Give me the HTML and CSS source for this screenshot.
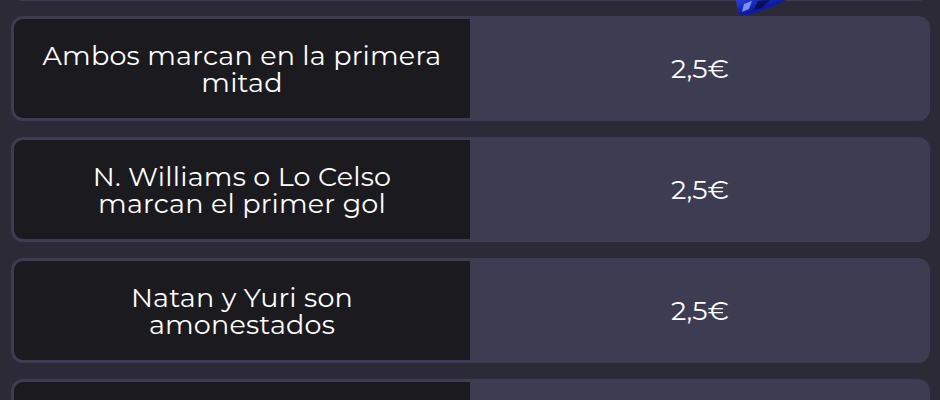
FILE: index.html
```html
<!DOCTYPE html>
<html lang="es">
<head>
<meta charset="utf-8">
<link rel="stylesheet" href="styles.css">
</head>
<body>
<div class="page">
  <div class="list">
    <div class="card card-prev">
      <div class="label"></div>
      <div class="price"></div>
    </div>
    <div class="card">
      <div class="label">Ambos marcan en la primera mitad</div>
      <div class="price">2,5€</div>
    </div>
    <div class="card">
      <div class="label">N. Williams o Lo Celso<br>marcan el primer gol</div>
      <div class="price">2,5€</div>
    </div>
    <div class="card">
      <div class="label">Natan y Yuri son<br>amonestados</div>
      <div class="price">2,5€</div>
    </div>
    <div class="card">
      <div class="label"></div>
      <div class="price"></div>
    </div>
  </div>
  <svg class="deco" width="60" height="20" viewBox="0 0 60 20">
    <defs>
      <linearGradient id="g" x1="0" y1="0" x2="1" y2="1">
        <stop offset="0" stop-color="#2a3fd8"/>
        <stop offset="0.5" stop-color="#0d1a9a"/>
        <stop offset="1" stop-color="#2236d0"/>
      </linearGradient>
    </defs>
    <polygon points="2,0 52,0 42,6 26,12 12,16 4,14" fill="url(#g)"/>
    <polygon points="10,4 18,1 15,9 8,12" fill="#8aa0ff" opacity="0.85"/>
    <polygon points="24,1 36,0 28,8 20,10" fill="#050a40" opacity="0.75"/>
  </svg>
</div>
</body>
</html>
```
FILE: styles.css
```css
html, body {
  margin: 0;
  padding: 0;
  background: #2b2a36;
}
body {
  width: 940px;
  height: 400px;
  overflow: hidden;
  font-family: "Montserrat", "Inter", "Open Sans", sans-serif;
  color: #ffffff;
}
.page {
  position: relative;
  display: flow-root;
  height: 400px;
}
.list {
  display: flex;
  flex-direction: column;
  gap: 16px;
  margin-top: -105px;
  padding-left: 11px;
  width: 919px;
}
.card {
  display: flex;
  height: 105px;
  box-sizing: border-box;
  background: #3d3c52;
  border-radius: 12px;
  padding: 3px 0 3px 3px;
}
.card-prev {
  height: 106px;
  margin-bottom: -1px;
}
.label {
  width: 456px;
  flex: none;
  background: #1b1a1f;
  border-radius: 9px 0 0 9px;
  display: flex;
  align-items: center;
  justify-content: center;
  text-align: center;
  font-size: 27px;
  line-height: 27px;
  letter-spacing: 0.2px;
  padding: 0 12px;
  box-sizing: border-box;
}
.price {
  flex: 1;
  display: flex;
  align-items: center;
  justify-content: center;
  font-size: 27px;
}
.deco {
  position: absolute;
  left: 734px;
  top: 0;
}
```
